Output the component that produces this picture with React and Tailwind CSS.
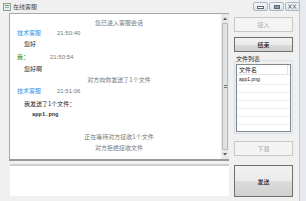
import React from 'react'

const cjk = { fontFamily: '"Noto Sans CJK SC", "Liberation Sans", sans-serif' }

function Row({ h, className = '', children }) {
  return <div className={`flex items-center ${h} ${className}`}>{children}</div>
}

function TitleButton({ children }) {
  return (
    <div className="flex h-[9px] w-[15px] items-center justify-center rounded-[2px] border border-[#a9b6c6] bg-gradient-to-b from-[#f4f6f9] to-[#dfe4ea]">
      {children}
    </div>
  )
}

function Button({ label, disabled, className = '' }) {
  return disabled ? (
    <div className={`flex items-center justify-center border border-[#c9c9c9] bg-[#f4f4f4] text-[6px] text-[#a6a6a6] ${className}`}>
      {label}
    </div>
  ) : (
    <div className={`flex items-center justify-center border border-[#707070] bg-[linear-gradient(#f2f2f2_0%,#ebebeb_50%,#dcdcdc_51%,#d0d0d0_100%)] text-[6px] text-black ${className}`}>
      {label}
    </div>
  )
}

export default function App() {
  return (
    <div className="flex h-[201px] w-[306px] overflow-hidden bg-[#e6e9ed]" style={cjk}>
      <div className="flex h-full w-[300px] flex-col border-r border-[#c4c8cc] bg-[#f0f0f0]">
        {/* title bar */}
        <div className="flex h-[13px] items-center">
          <svg width="8" height="8" viewBox="0 0 8 8" className="ml-[3px]">
            <rect x="0.5" y="0.5" width="7" height="7" fill="#e8efe8" stroke="#8aa08a" />
            <rect x="2" y="2" width="4" height="1" fill="#5a9a6a" />
            <rect x="2" y="4" width="4" height="1" fill="#9ab0c0" />
          </svg>
          <span className="ml-[2px] text-[6px] leading-none text-[#444]">在线客服</span>
          <div className="ml-auto mr-[-1px] flex gap-[1px]">
            <TitleButton>
              <div className="mt-[2px] h-[3px] w-[7px] border border-[#59677a] bg-white" />
            </TitleButton>
            <TitleButton>
              <div className="h-[4px] w-[6px] border border-[#59677a] bg-[#8c98a8]" />
            </TitleButton>
            <TitleButton>
              <svg width="9" height="5" viewBox="0 0 9 5">
                <path d="M0.5 0.5l3 4M3.5 0.5l-3 4M5 0.5l3 4M8 0.5l-3 4" stroke="#59677a" strokeWidth="0.9" fill="none" />
              </svg>
            </TitleButton>
          </div>
        </div>

        <div className="flex pl-[9px]">
          {/* left column */}
          <div className="flex w-[220px] flex-col">
            <div className="flex h-[148px] border-b-2 border-l border-t border-[#a8a8a8] border-b-[#9a9a9a] bg-white">
              <div className="flex flex-1 flex-col pl-[7px] pt-[4px] text-[6px] leading-none">
                <Row h="h-[10px]" className="justify-center text-[#777]">您已进入客服会话</Row>
                <Row h="h-[10px]">
                  <span className="text-[#3a8ee6]">技术客服</span>
                  <span className="ml-[16px] text-[#777]" style={{ fontFamily: '"Liberation Sans", sans-serif' }}>21:50:40</span>
                </Row>
                <Row h="h-[12px]" className="pl-[7px] text-[#222]">您好</Row>
                <Row h="h-[13px]">
                  <span className="text-[#0a8a0a]">我：</span>
                  <span className="ml-[21px] text-[#777]" style={{ fontFamily: '"Liberation Sans", sans-serif' }}>21:50:54</span>
                </Row>
                <Row h="h-[12px]" className="pl-[7px] text-[#222]">您好啊</Row>
                <Row h="h-[10px]" className="justify-center text-[#777]">对方向你发送了1个文件</Row>
                <Row h="h-[12px]">
                  <span className="text-[#3a8ee6]">技术客服</span>
                  <span className="ml-[16px] text-[#777]" style={{ fontFamily: '"Liberation Sans", sans-serif' }}>21:51:06</span>
                </Row>
                <Row h="h-[13px]" className="pl-[7px] text-[#222]">我发送了1个文件：</Row>
                <Row h="h-[10px]" className="pl-[15px] font-bold text-[#333]">
                  <span className="text-[5.5px]" style={{ fontFamily: '"Liberation Mono", monospace' }}>app1.png</span>
                </Row>
                <div className="h-[12px]" />
                <Row h="h-[10px]" className="justify-center text-[#777]">正在等待对方接收1个文件</Row>
                <Row h="h-[10px]" className="mt-[1px] justify-center text-[#777]">对方拒绝接收文件</Row>
              </div>
              {/* scrollbar */}
              <div className="flex w-[8px] flex-col bg-[#e8e8e8]">
                <div className="flex h-[9px] items-center justify-center">
                  <svg width="4" height="3" viewBox="0 0 4 3"><path d="M0 3L2 0.5L4 3Z" fill="#555" /></svg>
                </div>
                <div className="mx-[1px] flex flex-1 items-center justify-center rounded-[1px] border border-[#b8b8b8] bg-[#e2e2e2]">
                  <div className="flex flex-col gap-[1px]">
                    <div className="h-[1px] w-[3px] bg-[#777]" />
                    <div className="h-[1px] w-[3px] bg-[#777]" />
                  </div>
                </div>
                <div className="flex h-[9px] items-center justify-center">
                  <svg width="4" height="3" viewBox="0 0 4 3"><path d="M0 0L2 2.5L4 0Z" fill="#555" /></svg>
                </div>
              </div>
            </div>
            <div className="ml-[1px] mt-[3px] h-[32px] border-t-2 border-[#cfcfcf] bg-white" />
          </div>

          {/* right column */}
          <div className="ml-[5px] flex w-[59px] flex-col">
            <Button label="接入" disabled className="mt-[4px] h-[15px]" />
            <Button label="结束" className="mt-[5px] h-[15px]" />
            <div className="relative mt-[8px] h-[74px] rounded-[2px] border border-[#d5dfe5]">
              <span className="absolute left-[1px] top-[-5px] bg-[#f0f0f0] pr-[1px] text-[6px] leading-none text-[#222]">文件列表</span>
              <div className="mx-[1px] mt-[3px] flex h-[68px] flex-col border border-[#828790] bg-white">
                <div className="flex h-[10px] border-b border-[#e5e5e5]">
                  <div className="flex w-[51px] items-center border-r border-[#e5e5e5] pl-[2px] text-[6px] leading-none text-[#222]">文件名</div>
                </div>
                <div className="flex h-[10px] items-center border-b border-[#f0f0f0] pl-[2px] text-[5px] leading-none text-[#222]" style={{ fontFamily: '"Liberation Sans", sans-serif' }}>
                  app1.png
                </div>
                <div className="h-[8px] border-b border-[#f0f0f0]" />
                <div className="h-[8px] border-b border-[#f0f0f0]" />
                <div className="h-[8px] border-b border-[#f0f0f0]" />
                <div className="h-[8px] border-b border-[#f0f0f0]" />
                <div className="h-[8px] border-b border-[#f0f0f0]" />
              </div>
            </div>
            <Button label="下载" disabled className="mt-[7px] h-[15px]" />
            <Button label="发送" className="mt-[9px] h-[32px]" />
          </div>
        </div>
      </div>
    </div>
  )
}
